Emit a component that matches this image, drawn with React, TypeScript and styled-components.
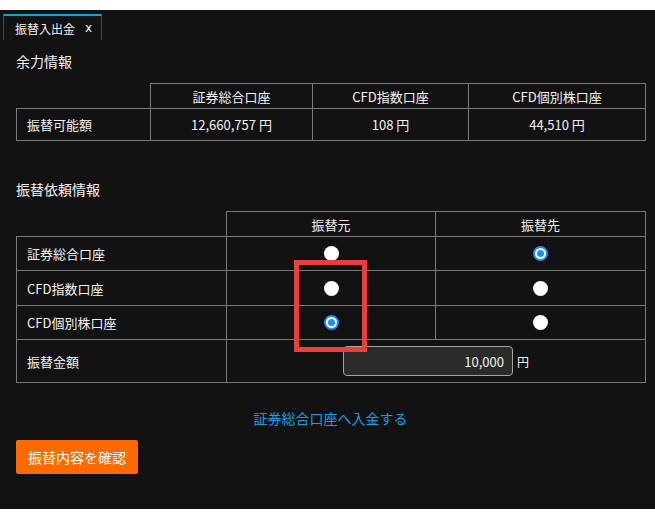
import { FC } from "react";
import styled, { createGlobalStyle } from "styled-components";

const GlobalStyle = createGlobalStyle`
    body {
        margin: 0;
        background: #ffffff;
        font-family: "Noto Sans CJK JP", "Noto Sans", sans-serif;
    }
`;

const balances = [
    { label: "証券総合口座", value: "12,660,757" },
    { label: "CFD指数口座", value: "108" },
    { label: "CFD個別株口座", value: "44,510" },
];

const transferRows = [
    { label: "証券総合口座", from: false, to: true },
    { label: "CFD指数口座", from: false, to: false },
    { label: "CFD個別株口座", from: true, to: false },
];

const App: FC = () => {
    return (
        <>
            <GlobalStyle />
            <Panel>
                <TabBar>
                    <Tab>
                        振替入出金
                        <TabClose>x</TabClose>
                    </Tab>
                </TabBar>
                <Content>
                    <SectionTitle>余力情報</SectionTitle>
                    <Table>
                        <colgroup>
                            <col style={{ width: 134 }} />
                            <col style={{ width: 162 }} />
                            <col style={{ width: 156 }} />
                            <col style={{ width: 177 }} />
                        </colgroup>
                        <thead>
                            <HeadRow>
                                <EmptyCell />
                                {balances.map((b) => (
                                    <HeadCell key={b.label}>{b.label}</HeadCell>
                                ))}
                            </HeadRow>
                        </thead>
                        <tbody>
                            <Row $height={32}>
                                <LabelCell>振替可能額</LabelCell>
                                {balances.map((b) => (
                                    <ValueCell key={b.label}>
                                        {b.value} 円
                                    </ValueCell>
                                ))}
                            </Row>
                        </tbody>
                    </Table>

                    <SectionTitle $top={38}>振替依頼情報</SectionTitle>
                    <Table>
                        <colgroup>
                            <col style={{ width: 210 }} />
                            <col style={{ width: 209 }} />
                            <col style={{ width: 210 }} />
                        </colgroup>
                        <thead>
                            <HeadRow>
                                <EmptyCell />
                                <HeadCell>振替元</HeadCell>
                                <HeadCell>振替先</HeadCell>
                            </HeadRow>
                        </thead>
                        <tbody>
                            {transferRows.map((r, i) => (
                                <Row key={r.label} $height={i === 1 ? 35 : 34}>
                                    <LabelCell>{r.label}</LabelCell>
                                    <ValueCell>
                                        <Radio $checked={r.from} />
                                    </ValueCell>
                                    <ValueCell>
                                        <Radio $checked={r.to} />
                                    </ValueCell>
                                </Row>
                            ))}
                            <Row $height={43}>
                                <LabelCell>振替金額</LabelCell>
                                <ValueCell colSpan={2}>
                                    <AmountWrap>
                                        <AmountInput
                                            defaultValue="10,000"
                                            readOnly
                                        />
                                        <Unit>円</Unit>
                                    </AmountWrap>
                                </ValueCell>
                            </Row>
                        </tbody>
                    </Table>

                    <DepositLink href="#">証券総合口座へ入金する</DepositLink>
                    <ConfirmButton>振替内容を確認</ConfirmButton>
                </Content>
                <Highlight />
            </Panel>
        </>
    );
};

export default App;

const Panel = styled.div`
    position: relative;
    margin-top: 10px;
    height: 499px;
    background: #121212;
    color: #f2f2f2;
`;

const TabBar = styled.div`
    display: flex;
    padding: 4px 0 0 3px;
`;

const Tab = styled.div`
    display: flex;
    align-items: center;
    box-sizing: border-box;
    height: 26px;
    padding: 0 9px 0 11px;
    border: 1px solid #175b7a;
    border-top: 2px solid #10a3dc;
    border-bottom: none;
    font-size: 12px;
    color: #f4f4f4;
`;

const TabClose = styled.span`
    margin-left: 10px;
    font-family: "DejaVu Sans", sans-serif;
    font-size: 12px;
`;

const Content = styled.div`
    display: flex;
    flex-direction: column;
    padding: 0 10px 0 16px;
`;

const SectionTitle = styled.div<{ $top?: number }>`
    margin-top: ${(p) => p.$top ?? 11}px;
    margin-bottom: 12px;
    font-size: 14px;
    line-height: 20px;
`;

const Table = styled.table`
    width: 629px;
    table-layout: fixed;
    border-collapse: collapse;
    font-size: 13px;
`;

const HeadRow = styled.tr`
    height: 25px;
`;

const Row = styled.tr<{ $height: number }>`
    height: ${(p) => p.$height}px;
`;

const EmptyCell = styled.th`
    border: none;
    padding: 0;
`;

const HeadCell = styled.th`
    border: 1px solid #7a7a7a;
    padding: 0;
    font-weight: normal;
    text-align: center;
`;

const LabelCell = styled.td`
    border: 1px solid #7a7a7a;
    padding: 0 0 0 10px;
    text-align: left;
`;

const ValueCell = styled.td`
    border: 1px solid #7a7a7a;
    padding: 0;
    text-align: center;
    vertical-align: middle;
`;

const Radio = styled.span<{ $checked: boolean }>`
    display: block;
    box-sizing: border-box;
    width: 15px;
    height: 15px;
    margin: 0 auto;
    border-radius: 50%;
    background: #ffffff;
    border: ${(p) => (p.$checked ? "2px solid #1f8cf0" : "none")};
    position: relative;

    &::after {
        content: "";
        display: ${(p) => (p.$checked ? "block" : "none")};
        position: absolute;
        left: 50%;
        top: 50%;
        width: 7px;
        height: 7px;
        margin: -3.5px 0 0 -3.5px;
        border-radius: 50%;
        background: #1f8cf0;
    }
`;

const AmountWrap = styled.div`
    display: flex;
    justify-content: center;
    align-items: center;
    gap: 4px;
`;

const AmountInput = styled.input`
    box-sizing: border-box;
    width: 170px;
    height: 30px;
    padding: 0 8px;
    border: 1px solid #a5a5a5;
    border-radius: 4px;
    background: #2b2b2b;
    color: #f4f4f4;
    font-family: "Noto Sans CJK JP", "Noto Sans", sans-serif;
    font-size: 13px;
    text-align: right;
    outline: none;
`;

const Unit = styled.span`
    font-size: 12px;
`;

const DepositLink = styled.a`
    align-self: center;
    margin-top: 25px;
    font-size: 14px;
    line-height: 20px;
    color: #1c9ee0;
    text-decoration: none;
`;

const ConfirmButton = styled.button`
    align-self: flex-start;
    margin-top: 12px;
    height: 34px;
    padding: 0 12px;
    border: none;
    border-radius: 2px;
    background: #ff6a00;
    color: #ffffff;
    font-family: "Noto Sans CJK JP", "Noto Sans", sans-serif;
    font-size: 14px;
    cursor: pointer;
`;

const Highlight = styled.div`
    position: absolute;
    left: 294px;
    top: 250px;
    width: 73px;
    height: 92px;
    box-sizing: border-box;
    border: 5px solid #e8403f;
    pointer-events: none;
`;
